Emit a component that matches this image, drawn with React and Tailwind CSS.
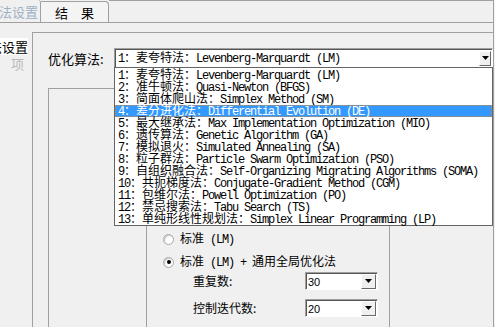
import React from "react";

const items = [
  ["1", "麦夸特法", "Levenberg-Marquardt (LM)"],
  ["2", "准牛顿法", "Quasi-Newton (BFGS)"],
  ["3", "简面体爬山法", "Simplex Method (SM)"],
  ["4", "差分进化法", "Differential Evolution (DE)"],
  ["5", "最大继承法", "Max Implementation Optimization (MIO)"],
  ["6", "遗传算法", "Genetic Algorithm (GA)"],
  ["7", "模拟退火", "Simulated Annealing (SA)"],
  ["8", "粒子群法", "Particle Swarm Optimization (PSO)"],
  ["9", "自组织融合法", "Self-Organizing Migrating Algorithms (SOMA)"],
  ["10", "共扼梯度法", "Conjugate-Gradient Method (CGM)"],
  ["11", "包维尔法", "Powell Optimization (PO)"],
  ["12", "禁忌搜索法", "Tabu Search (TS)"],
  ["13", "单纯形线性规划法", "Simplex Linear Programming (LP)"],
];

const MONO = "font-['Liberation_Mono',monospace] text-[12px] tracking-[-1.2px] leading-[12px]";
const CJK = "font-['Noto_Sans_CJK_SC',sans-serif] text-[12px] leading-[12px]";

function ItemText({ n, zh, en }) {
  return (
    <>
      <span className={MONO}>{n}</span>
      <span className={CJK}>：{zh}：</span>
      <span className={MONO}>{en}</span>
    </>
  );
}

function Arrow() {
  return (
    <svg width="7" height="4" viewBox="0 0 7 4">
      <path d="M0 0h7L3.5 4z" fill="#000" />
    </svg>
  );
}

function SmallCombo({ value }) {
  return (
    <div className="w-[73px] h-[18px] bg-white border border-t-[#a0a0a0] border-l-[#a0a0a0] border-r-white border-b-white shadow-[inset_1px_1px_0_#555] flex items-center">
      <span className="flex-1 pl-[2px] pt-[1px] font-['Liberation_Sans',sans-serif] text-[11px] leading-[14px]">{value}</span>
      <div className="w-[15px] h-[15px] mr-[1px] bg-[#f0f0f0] border border-t-white border-l-white border-r-[#696969] border-b-[#696969] flex items-center justify-center">
        <Arrow />
      </div>
    </div>
  );
}

function Radio({ checked }) {
  return (
    <div className="w-[11px] h-[11px] rounded-full bg-white border border-[#a8a8a8] shadow-[inset_1px_1px_1px_#c8c8c8] flex items-center justify-center">
      {checked && <div className="w-[4px] h-[4px] rounded-full bg-black" />}
    </div>
  );
}

export default function App() {
  return (
    <div className="w-[495px] h-[327px] bg-[#f0f0f0] overflow-hidden flex flex-col font-['Noto_Sans_CJK_SC',sans-serif] text-[12px] text-black leading-none">
      {/* tab strip */}
      <div className="h-[22px] w-[494px] flex items-end shrink-0">
        <div className="w-[41px] h-[22px] border-r border-[#a0a0a0] rounded-tr-[3px] overflow-hidden flex justify-end items-center pr-[2px]">
          <span className="text-[13px] text-[#9fb0c4] whitespace-nowrap">算法设置</span>
        </div>
        <div className="w-[68px] h-[21px] border-t border-r border-[#a0a0a0] rounded-tr-[4px] bg-[#f4f4f4] flex items-center justify-center text-[13px]">
          结　果
        </div>
        <div className="flex-1 h-[22px] border-t border-r border-[#a0a0a0]" />
      </div>

      {/* page */}
      <div className="w-[494px] flex-1 border-t border-r border-[#a0a0a0] pt-[9px] flex">
        {/* left list */}
        <div className="w-[32px] pt-[6px] flex flex-col overflow-hidden">
          <div className="h-[17px] w-[28px] bg-white flex items-center justify-end whitespace-nowrap text-[13px]">
            算法设置
          </div>
          <div className="h-[17px] flex items-center pl-[11px] whitespace-nowrap text-[13px] text-[#b8b8b8]">
            项
          </div>
        </div>

        {/* main panel */}
        <div className="flex-1 border-t border-l border-[#a0a0a0] pt-[15px] pl-[15px] flex flex-col">
          <div className="h-[20px] flex items-center">
            <div className="w-[66px] text-[13px]">优化算法:</div>
            <div className="flex-1 relative h-[20px]">
              <div className="h-[20px] bg-white border border-t-[#a0a0a0] border-l-[#a0a0a0] border-r-white border-b-white shadow-[inset_1px_1px_0_#555] flex items-center">
                <div className="flex-1 pl-[3px] whitespace-nowrap flex items-baseline">
                  <ItemText n="1" zh="麦夸特法" en="Levenberg-Marquardt (LM)" />
                </div>
                <div className="w-[12px] h-[15px] mr-[1px] bg-[#f0f0f0] border border-t-white border-l-white border-r-[#696969] border-b-[#696969] flex items-center justify-center">
                  <Arrow />
                </div>
              </div>
              {/* dropdown list */}
              <div className="absolute left-0 right-0 top-[19px] z-10 bg-white border border-[#646464] pt-[1px] flex flex-col">
                {items.map(([n, zh, en]) =>
                  n === "4" ? (
                    <div key={n} className="h-[12px] flex items-center whitespace-nowrap pl-[2px] bg-[#3399ff] text-white border border-dotted border-[#d08a40]">
                      <div className="flex items-baseline">
                        <ItemText n={n} zh={zh} en={en} />
                      </div>
                    </div>
                  ) : (
                    <div key={n} className="h-[12px] flex items-center whitespace-nowrap pl-[3px]">
                      <div className="flex items-baseline">
                        <ItemText n={n} zh={zh} en={en} />
                      </div>
                    </div>
                  )
                )}
              </div>
            </div>
          </div>

          {/* group box */}
          <fieldset className="mt-[13px] flex-1 border-t border-l border-[#a0a0a0] pl-[97px] min-w-0">
            <legend className="ml-[5px] px-[2px] text-[12px] leading-[14px]">算法参数设置</legend>
            <div className="mt-[100px] w-[244px] h-[200px] border-t border-l border-r border-[#a0a0a0] pl-[16px] pt-[36px] flex flex-col">
              <div className="h-[14px] flex items-center gap-[6px]">
                <Radio />
                <div className="flex items-baseline whitespace-nowrap">
                  <span className={CJK}>标准</span>
                  <span className={MONO}>&nbsp;(LM)</span>
                </div>
              </div>
              <div className="h-[14px] mt-[9px] flex items-center gap-[6px]">
                <Radio checked />
                <div className="flex items-baseline whitespace-nowrap">
                  <span className={CJK}>标准</span>
                  <span className={MONO}>&nbsp;(LM)&nbsp;+&nbsp;</span>
                  <span className={CJK}>通用全局优化法</span>
                </div>
              </div>
              <div className="mt-[3px] h-[18px] flex items-center pl-[30px]">
                <div className="w-[112px] text-[12px]">重复数:</div>
                <SmallCombo value="30" />
              </div>
              <div className="mt-[9px] h-[18px] flex items-center pl-[30px]">
                <div className="w-[112px] text-[12px]">控制迭代数:</div>
                <SmallCombo value="20" />
              </div>
            </div>
          </fieldset>
        </div>
      </div>
    </div>
  );
}
